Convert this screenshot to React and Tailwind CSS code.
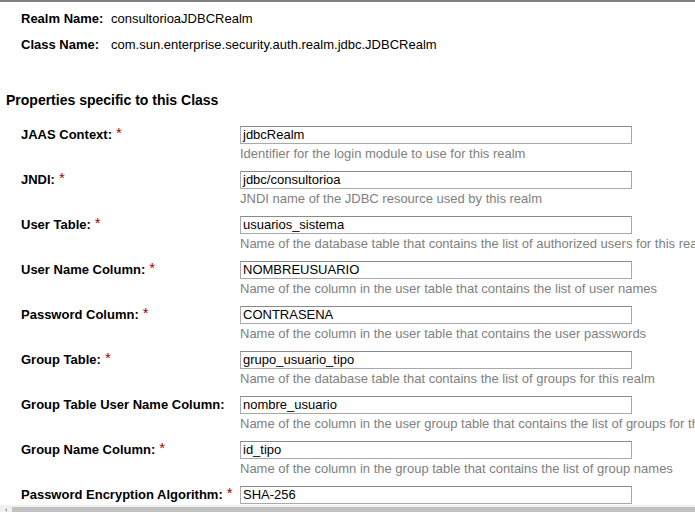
const rows = [
  { label: 'JAAS Context:', req: true, value: 'jdbcRealm', help: 'Identifier for the login module to use for this realm' },
  { label: 'JNDI:', req: true, value: 'jdbc/consultorioa', help: 'JNDI name of the JDBC resource used by this realm' },
  { label: 'User Table:', req: true, value: 'usuarios_sistema', help: 'Name of the database table that contains the list of authorized users for this realm' },
  { label: 'User Name Column:', req: true, value: 'NOMBREUSUARIO', help: 'Name of the column in the user table that contains the list of user names' },
  { label: 'Password Column:', req: true, value: 'CONTRASENA', help: 'Name of the column in the user table that contains the user passwords' },
  { label: 'Group Table:', req: true, value: 'grupo_usuario_tipo', help: 'Name of the database table that contains the list of groups for this realm' },
  { label: 'Group Table User Name Column:', req: false, value: 'nombre_usuario', help: 'Name of the column in the user group table that contains the list of groups for this realm' },
  { label: 'Group Name Column:', req: true, value: 'id_tipo', help: 'Name of the column in the group table that contains the list of group names' },
  { label: 'Password Encryption Algorithm:', req: true, value: 'SHA-256', help: '' },
];

export default function App() {
  return (
    <div
      className="h-[512px] w-[695px] flex flex-col overflow-hidden bg-white text-black whitespace-nowrap"
      style={{ fontFamily: '"Liberation Sans", Arial, sans-serif' }}
    >
      <div className="h-[2px] bg-[#808080] shrink-0" />
      <div className="flex-1 overflow-hidden">
        <div className="pl-[21px] pt-[8px] text-[13px]">
          <div className="flex h-[17px] items-center">
            <span className="font-bold w-[90px]">Realm Name:</span>
            <span>consultorioaJDBCRealm</span>
          </div>
          <div className="flex h-[17px] items-center mt-[9px]">
            <span className="font-bold w-[90px]">Class Name:</span>
            <span>com.sun.enterprise.security.auth.realm.jdbc.JDBCRealm</span>
          </div>
        </div>
        <h2 className="pl-[6px] mt-[39px] text-[14px] leading-[16px] font-bold">Properties specific to this Class</h2>
        <div className="mt-[18px]">
          {rows.map(r => (
            <div key={r.label} className="flex h-[45px] pl-[21px] text-[13px]">
              <div className="w-[219px] shrink-0 font-bold leading-[18px]">
                {r.label}
                {r.req && <sup className="text-[#a00] text-[15px] font-normal ml-[4px] relative top-[-1px]">*</sup>}
              </div>
              <div>
                <div className="w-[392px] h-[18px] border border-[#a9a9a9] border-t-[#8a8a8a] px-[2px] leading-[16px] text-[13px] text-black bg-white">
                  {r.value}
                </div>
                {r.help && <div className="text-[#808080] leading-[17px] mt-[1px]">{r.help}</div>}
              </div>
            </div>
          ))}
        </div>
      </div>
      <div className="shrink-0 h-[2px] bg-[#f0f0f0]" />
      <div className="shrink-0 h-[5px] flex bg-[#f0f0f0]">
        <div className="w-[12px] flex items-start justify-center">
          <div className="w-0 h-0 border-y-[2px] border-y-transparent border-r-[2px] border-r-[#a0a0a0] mt-[1px]" />
        </div>
        <div className="flex-1 bg-[#c1c1c1]" />
      </div>
    </div>
  );
}
